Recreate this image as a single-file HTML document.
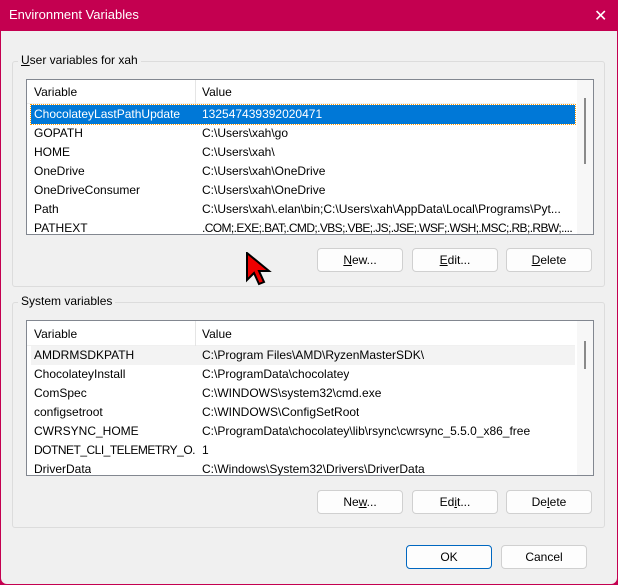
<!DOCTYPE html><html><head><style>
*{margin:0;padding:0;box-sizing:border-box}
body{width:618px;height:585px;background:#c40050;font-family:"Liberation Sans",sans-serif;font-size:12px;color:#000;position:relative;overflow:hidden}
.title{position:absolute;left:9px;top:7px;color:#fff;font-size:13px}
.x{position:absolute;left:594px;top:6px;color:#fff;font-size:16px}
.body{position:absolute;left:1px;top:31px;width:616px;height:553px;background:#f0f0f0;border-radius:0 0 6px 6px}
.grp{position:absolute;border:1px solid #dcdcdc;border-radius:3px}
.lbl{position:absolute;background:#f0f0f0;padding:0 3px}
.list{position:absolute;background:#fff;border:1px solid #828790;overflow:hidden}
.hdr{position:absolute;left:0;top:0;height:24px;width:548px;border-bottom:1px solid #f0f0f0}
.hdr span{position:absolute;top:5px}
.sep{position:absolute;left:168px;top:0;width:1px;height:24px;background:#e5e5e5}
.row{position:absolute;left:4px;width:544px;height:19px}
.row span{position:absolute;top:2px;white-space:nowrap;overflow:hidden}
.row .a{left:3px;max-width:162px}.row .b{left:171px;max-width:372px}
.sel{background:#0078d7;color:#fff;outline:1px dotted #f90}
.sb{position:absolute;right:0;top:0;width:16px;height:100%;background:#f7f7f7}
.thumb{position:absolute;left:7px;width:2px;background:#8a8a8a}
.btn{position:absolute;height:24px;width:86px;background:#fdfdfd;border:1px solid #d0d0d0;border-radius:4px;text-align:center;line-height:22px}
.ok{border:1px solid #0067c0}
u{text-decoration:underline}
</style></head><body>
<div class="title">Environment Variables</div>
<div class="x">✕</div>
<div class="body">
<div class="grp" style="left:11px;top:30px;width:593px;height:226px"></div>
<div class="lbl" style="left:17px;top:22px"><u>U</u>ser variables for xah</div>
<div class="list" style="left:25px;top:48px;width:568px;height:156px">
<div class="hdr"><span style="left:7px">Variable</span><div class="sep"></div><span style="left:175px">Value</span></div>
<div class="row sel" style="top:25px"><span class="a">ChocolateyLastPathUpdate</span><span class="b">132547439392020471</span></div>
<div class="row" style="top:44px"><span class="a">GOPATH</span><span class="b">C:\Users\xah\go</span></div>
<div class="row" style="top:63px"><span class="a">HOME</span><span class="b">C:\Users\xah\</span></div>
<div class="row" style="top:82px"><span class="a">OneDrive</span><span class="b">C:\Users\xah\OneDrive</span></div>
<div class="row" style="top:101px"><span class="a">OneDriveConsumer</span><span class="b">C:\Users\xah\OneDrive</span></div>
<div class="row" style="top:120px"><span class="a">Path</span><span class="b">C:\Users\xah\.elan\bin;C:\Users\xah\AppData\Local\Programs\Pyt...</span></div>
<div class="row" style="top:139px"><span class="a">PATHEXT</span><span class="b" style="letter-spacing:-0.6px">.COM;.EXE;.BAT;.CMD;.VBS;.VBE;.JS;.JSE;.WSF;.WSH;.MSC;.RB;.RBW;....</span></div>
<div class="sb"><div class="thumb" style="top:18px;height:66px"></div></div>
</div>
<div class="btn" style="left:316px;top:217px"><u>N</u>ew...</div>
<div class="btn" style="left:411px;top:217px"><u>E</u>dit...</div>
<div class="btn" style="left:505px;top:217px"><u>D</u>elete</div>
<svg style="position:absolute;left:244px;top:221px" width="30" height="34"><path d="M2 1 L2 28 L9 21 L14 32 L19 30 L14 19 L24 19 Z" fill="#e00" stroke="#000" stroke-width="2"/></svg>

<div class="grp" style="left:11px;top:271px;width:593px;height:226px"></div>
<div class="lbl" style="left:17px;top:263px">System variables</div>
<div class="list" style="left:25px;top:289px;width:568px;height:156px">
<div class="hdr" style="height:25px"><span style="left:7px;top:6px">Variable</span><div class="sep" style="height:25px"></div><span style="left:175px;top:6px">Value</span></div>
<div class="row" style="top:25px;background:#f3f3f3"><span class="a">AMDRMSDKPATH</span><span class="b">C:\Program Files\AMD\RyzenMasterSDK\</span></div>
<div class="row" style="top:44px"><span class="a">ChocolateyInstall</span><span class="b">C:\ProgramData\chocolatey</span></div>
<div class="row" style="top:63px"><span class="a">ComSpec</span><span class="b">C:\WINDOWS\system32\cmd.exe</span></div>
<div class="row" style="top:82px"><span class="a">configsetroot</span><span class="b">C:\WINDOWS\ConfigSetRoot</span></div>
<div class="row" style="top:101px"><span class="a">CWRSYNC_HOME</span><span class="b">C:\ProgramData\chocolatey\lib\rsync\cwrsync_5.5.0_x86_free</span></div>
<div class="row" style="top:120px"><span class="a" style="letter-spacing:-0.5px">DOTNET_CLI_TELEMETRY_O...</span><span class="b">1</span></div>
<div class="row" style="top:139px"><span class="a">DriverData</span><span class="b">C:\Windows\System32\Drivers\DriverData</span></div>
<div class="sb"><div class="thumb" style="top:20px;height:28px"></div></div>
</div>
<div class="btn" style="left:316px;top:459px">Ne<u>w</u>...</div>
<div class="btn" style="left:411px;top:459px">Ed<u>i</u>t...</div>
<div class="btn" style="left:505px;top:459px">De<u>l</u>ete</div>
<div class="btn ok" style="left:405px;top:514px">OK</div>
<div class="btn" style="left:500px;top:514px">Cancel</div>
</div>
</body></html>
